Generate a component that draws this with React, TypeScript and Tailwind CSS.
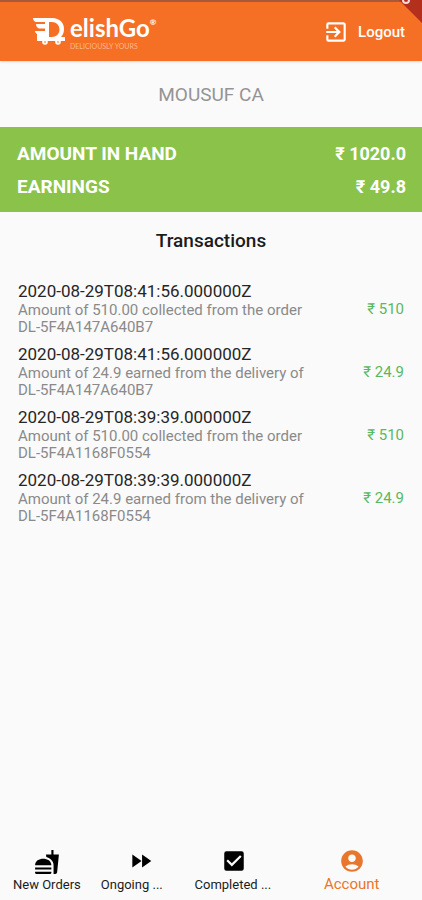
import React from 'react';
import {
  MdAccountCircle,
  MdCheckBox,
  MdExitToApp,
  MdFastfood,
  MdFastForward,
} from 'react-icons/md';

const transactions = [
  {
    id: 1,
    date: '2020-08-29T08:41:56.000000Z',
    note: 'Amount of 510.00 collected from the order DL-5F4A147A640B7',
    amount: '₹ 510',
  },
  {
    id: 2,
    date: '2020-08-29T08:41:56.000000Z',
    note: 'Amount of 24.9 earned from the delivery of DL-5F4A147A640B7',
    amount: '₹ 24.9',
  },
  {
    id: 3,
    date: '2020-08-29T08:39:39.000000Z',
    note: 'Amount of 510.00 collected from the order DL-5F4A1168F0554',
    amount: '₹ 510',
  },
  {
    id: 4,
    date: '2020-08-29T08:39:39.000000Z',
    note: 'Amount of 24.9 earned from the delivery of DL-5F4A1168F0554',
    amount: '₹ 24.9',
  },
];

const Logo: React.FC = () => (
  <div className="flex items-start text-white font-[Lato,sans-serif]">
    {/* delivery van shaped like a D */}
    <svg viewBox="0 0 33 28" className="h-7 w-[33px]" aria-hidden="true">
      <g fill="currentColor">
        <path d="M0 0H15V4H3Q0 3 0 0ZM3 6H15V10.500H6Q3 9 3 6ZM2 13H15V19H4V16Q2 15 2 13Z" />
        <path
          fillRule="evenodd"
          d="M12 0H19C27 0 31 5 31 11C31 14 30 17 28 19H32V23H4V18H12ZM16 4V19H19C23 19 26.500 16 26.500 11.500C26.500 7 23 4 19 4Z"
        />
        <circle cx="12" cy="24" r="2.800" />
        <circle cx="25" cy="24" r="2.800" />
      </g>
      <circle cx="12" cy="24" r="1" fill="#f8a070" />
      <circle cx="25" cy="24" r="1" fill="#f8a070" />
    </svg>
    <div className="flex flex-col gap-[5px] pl-[4px]">
      <div className="flex items-start text-2xl leading-5 font-bold">
        elishGo
        <span className="text-[8px] leading-[8px]">®</span>
      </div>
      <span className="text-[7px] leading-[6px] text-[#fbb88c]">DELICIOUSLY YOURS</span>
    </div>
  </div>
);

const DebugRibbon: React.FC = () => (
  <svg viewBox="0 0 28 26" className="absolute top-0 right-0 h-[26px] w-7" aria-hidden="true">
    <path d="M5 0L28 23V0Z" fill="#b5301c" />
    <circle cx="12" cy="0" r="3" fill="none" stroke="#f3dcd8" strokeWidth="2" />
  </svg>
);

const App: React.FC = () => {
  return (
    <div className="relative flex min-h-screen flex-col bg-[#fafafa] font-[Roboto,sans-serif]">
      <header className="flex items-start justify-between border-t-2 border-[#a65a3c] bg-[#f56f24] pt-4 pr-[17px] pb-3 pl-[33px] shadow">
        <Logo />
        <button type="button" className="flex h-7 items-center gap-[9px] text-[15px] font-medium text-white">
          <MdExitToApp className="size-[26px]" />
          Logout
        </button>
      </header>
      <DebugRibbon />

      <main className="flex-1">
        <h1 className="pt-[22px] pb-5 text-center text-[19px] leading-6 text-[#949494]">MOUSUF CA</h1>

        <dl className="bg-[#8bc34a] pt-[10px] pr-4 pb-[9px] pl-[17px] font-bold text-white">
          <div className="flex justify-between leading-[33px]">
            <dt className="text-[19px] leading-[33px]">AMOUNT IN HAND</dt>
            <dd className="text-lg leading-[33px]">₹ 1020.0</dd>
          </div>
          <div className="flex justify-between leading-[33px]">
            <dt className="text-[19px] leading-[33px]">EARNINGS</dt>
            <dd className="text-lg leading-[33px]">₹ 49.8</dd>
          </div>
        </dl>

        <h2 className="pt-[17px] text-center text-[19px] leading-6 font-medium text-[#1c1c1c]">Transactions</h2>

        <ul className="flex flex-col gap-2 px-[18px] pt-7">
          {transactions.map((item) => (
            <li key={item.id} className="flex items-center justify-between">
              <div className="w-[300px]">
                <p className="text-[17px] leading-[21px] text-[#262626]">{item.date}</p>
                <p className="text-[15px] leading-[17px] text-[#8a8a8a]">{item.note}</p>
              </div>
              <span className="pt-[2px] text-[15px] text-[#5cb860]">{item.amount}</span>
            </li>
          ))}
        </ul>
      </main>

      <nav className="grid h-[60px] grid-cols-[1fr_1fr_1fr_1.5fr] text-[13px] leading-4 text-[#1c1c1c]">
        <button type="button" className="flex flex-col items-center gap-[2px] pt-[9px]">
          <MdFastfood className="size-[26px] text-black" />
          New Orders
        </button>
        <button type="button" className="flex flex-col items-center gap-[2px] pt-[8px]">
          <MdFastForward className="size-[26px] text-black" />
          <span className="w-full pt-px pl-[7px] text-left">Ongoing ...</span>
        </button>
        <button type="button" className="flex flex-col items-center gap-[2px] pt-[8px]">
          <MdCheckBox className="size-[26px] text-black" />
          <span className="w-full pt-px pl-[7px] text-left">Completed ...</span>
        </button>
        <button type="button" className="flex flex-col items-center gap-[2px] pt-[8px] text-[15px] text-[#e8762c]">
          <MdAccountCircle className="size-[26px]" />
          Account
        </button>
      </nav>
    </div>
  );
};

export default App;
